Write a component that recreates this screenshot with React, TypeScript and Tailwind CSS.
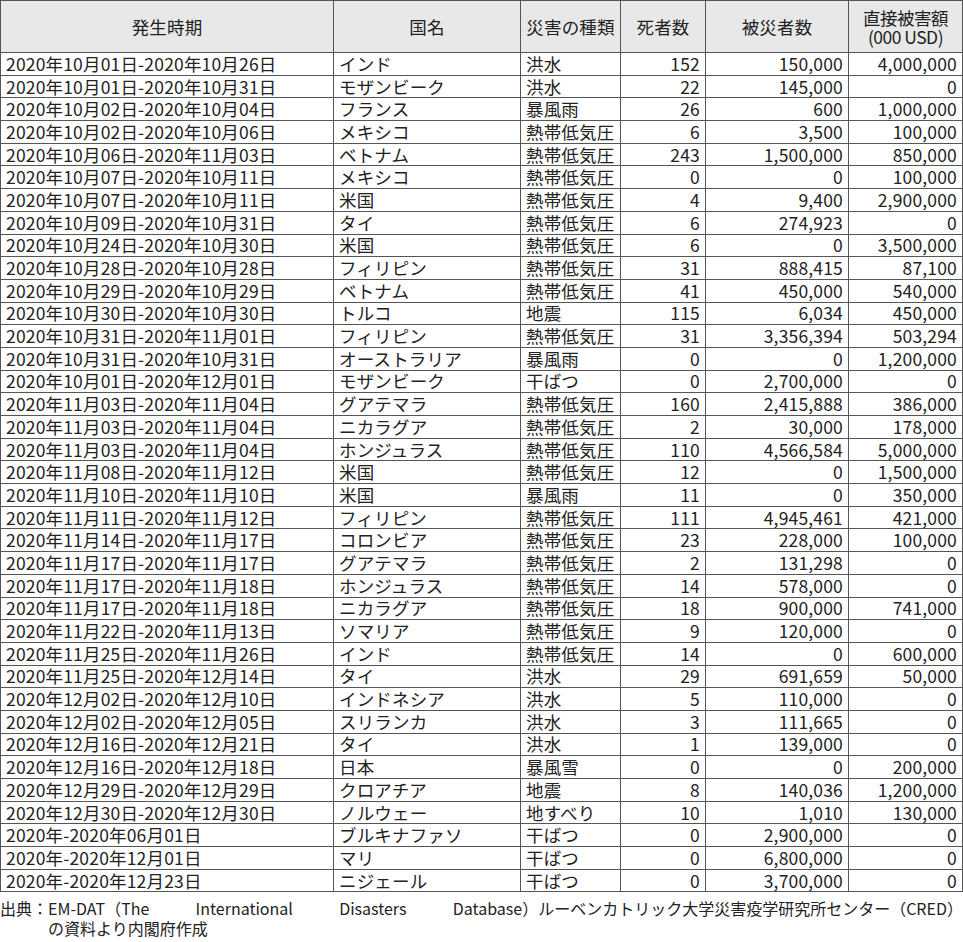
const rows: [string, string, string, string, string, string][] = [
  ['2020年10月01日-2020年10月26日', 'インド', '洪水', '152', '150,000', '4,000,000'],
  ['2020年10月01日-2020年10月31日', 'モザンビーク', '洪水', '22', '145,000', '0'],
  ['2020年10月02日-2020年10月04日', 'フランス', '暴風雨', '26', '600', '1,000,000'],
  ['2020年10月02日-2020年10月06日', 'メキシコ', '熱帯低気圧', '6', '3,500', '100,000'],
  ['2020年10月06日-2020年11月03日', 'ベトナム', '熱帯低気圧', '243', '1,500,000', '850,000'],
  ['2020年10月07日-2020年10月11日', 'メキシコ', '熱帯低気圧', '0', '0', '100,000'],
  ['2020年10月07日-2020年10月11日', '米国', '熱帯低気圧', '4', '9,400', '2,900,000'],
  ['2020年10月09日-2020年10月31日', 'タイ', '熱帯低気圧', '6', '274,923', '0'],
  ['2020年10月24日-2020年10月30日', '米国', '熱帯低気圧', '6', '0', '3,500,000'],
  ['2020年10月28日-2020年10月28日', 'フィリピン', '熱帯低気圧', '31', '888,415', '87,100'],
  ['2020年10月29日-2020年10月29日', 'ベトナム', '熱帯低気圧', '41', '450,000', '540,000'],
  ['2020年10月30日-2020年10月30日', 'トルコ', '地震', '115', '6,034', '450,000'],
  ['2020年10月31日-2020年11月01日', 'フィリピン', '熱帯低気圧', '31', '3,356,394', '503,294'],
  ['2020年10月31日-2020年10月31日', 'オーストラリア', '暴風雨', '0', '0', '1,200,000'],
  ['2020年10月01日-2020年12月01日', 'モザンビーク', '干ばつ', '0', '2,700,000', '0'],
  ['2020年11月03日-2020年11月04日', 'グアテマラ', '熱帯低気圧', '160', '2,415,888', '386,000'],
  ['2020年11月03日-2020年11月04日', 'ニカラグア', '熱帯低気圧', '2', '30,000', '178,000'],
  ['2020年11月03日-2020年11月04日', 'ホンジュラス', '熱帯低気圧', '110', '4,566,584', '5,000,000'],
  ['2020年11月08日-2020年11月12日', '米国', '熱帯低気圧', '12', '0', '1,500,000'],
  ['2020年11月10日-2020年11月10日', '米国', '暴風雨', '11', '0', '350,000'],
  ['2020年11月11日-2020年11月12日', 'フィリピン', '熱帯低気圧', '111', '4,945,461', '421,000'],
  ['2020年11月14日-2020年11月17日', 'コロンビア', '熱帯低気圧', '23', '228,000', '100,000'],
  ['2020年11月17日-2020年11月17日', 'グアテマラ', '熱帯低気圧', '2', '131,298', '0'],
  ['2020年11月17日-2020年11月18日', 'ホンジュラス', '熱帯低気圧', '14', '578,000', '0'],
  ['2020年11月17日-2020年11月18日', 'ニカラグア', '熱帯低気圧', '18', '900,000', '741,000'],
  ['2020年11月22日-2020年11月13日', 'ソマリア', '熱帯低気圧', '9', '120,000', '0'],
  ['2020年11月25日-2020年11月26日', 'インド', '熱帯低気圧', '14', '0', '600,000'],
  ['2020年11月25日-2020年12月14日', 'タイ', '洪水', '29', '691,659', '50,000'],
  ['2020年12月02日-2020年12月10日', 'インドネシア', '洪水', '5', '110,000', '0'],
  ['2020年12月02日-2020年12月05日', 'スリランカ', '洪水', '3', '111,665', '0'],
  ['2020年12月16日-2020年12月21日', 'タイ', '洪水', '1', '139,000', '0'],
  ['2020年12月16日-2020年12月18日', '日本', '暴風雪', '0', '0', '200,000'],
  ['2020年12月29日-2020年12月29日', 'クロアチア', '地震', '8', '140,036', '1,200,000'],
  ['2020年12月30日-2020年12月30日', 'ノルウェー', '地すべり', '10', '1,010', '130,000'],
  ['2020年-2020年06月01日', 'ブルキナファソ', '干ばつ', '0', '2,900,000', '0'],
  ['2020年-2020年12月01日', 'マリ', '干ばつ', '0', '6,800,000', '0'],
  ['2020年-2020年12月23日', 'ニジェール', '干ばつ', '0', '3,700,000', '0'],
];

const font = { fontFamily: '"Noto Sans CJK JP", "Noto Sans", sans-serif' };

export default function App() {
  const td = 'border border-[#555] px-[5px] py-0 h-[22.7px] leading-[20px] whitespace-nowrap';
  const th = 'border border-[#555] font-normal text-center leading-[19px]';
  return (
    <div className="w-[963px] h-[942px] overflow-hidden bg-white text-[#222] text-[17.5px] tracking-[0.01em]" style={font}>
      <table className="w-[962px] border-collapse table-fixed">
        <colgroup>
          <col className="w-[333px]" />
          <col className="w-[187px]" />
          <col className="w-[100px]" />
          <col className="w-[85px]" />
          <col className="w-[143px]" />
          <col className="w-[114px]" />
        </colgroup>
        <thead>
          <tr className="bg-[#e8e8e8] h-[52px]">
            <th className={th}>発生時期</th>
            <th className={th}>国名</th>
            <th className={th}>災害の種類</th>
            <th className={th}>死者数</th>
            <th className={th}>被災者数</th>
            <th className={`${th} tracking-[-0.03em]`}>直接被害額<br />(000 USD)</th>
          </tr>
        </thead>
        <tbody>
          {rows.map((r, i) => (
            <tr key={i}>
              <td className={td}>{r[0]}</td>
              <td className={td}>{r[1]}</td>
              <td className={td}>{r[2]}</td>
              <td className={`${td} text-right`}>{r[3]}</td>
              <td className={`${td} text-right`}>{r[4]}</td>
              <td className={`${td} text-right`}>{r[5]}</td>
            </tr>
          ))}
        </tbody>
      </table>
      <div className="pt-[6px] text-[16px] leading-[20px] tracking-normal">
        <div className="flex">
          <span>出典：</span>
          <span className="flex-1 flex justify-between">
            <span>EM-DAT（The</span><span>International</span><span>Disasters</span>
            <span>Database）ルーベンカトリック大学災害疫学研究所センター（CRED）</span>
          </span>
        </div>
        <div className="pl-[48px]">の資料より内閣府作成</div>
      </div>
    </div>
  );
}
